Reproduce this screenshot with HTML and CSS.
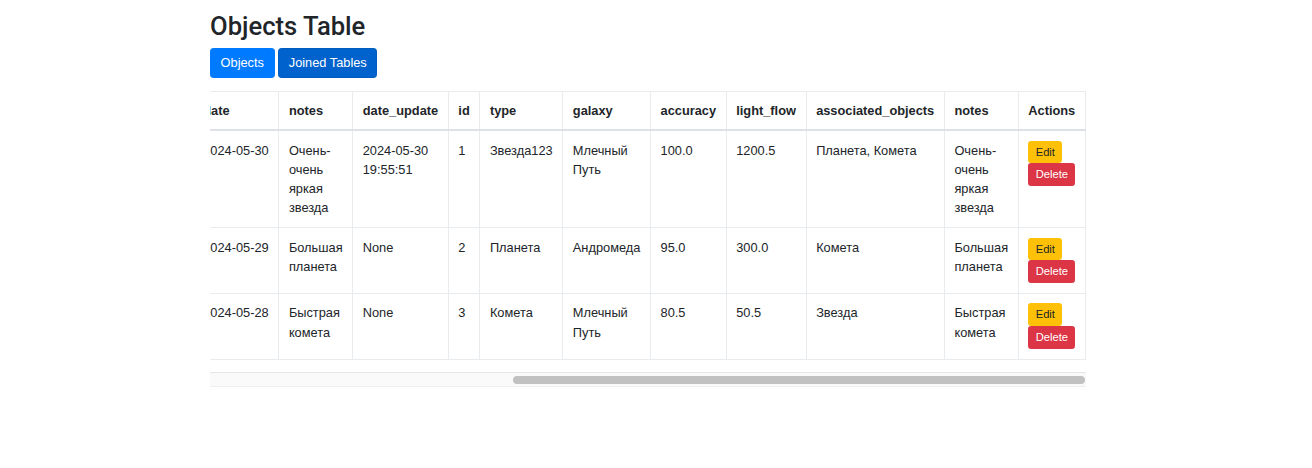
FILE: index.html
```html
<!DOCTYPE html>
<html lang="ru">
<head>
<meta charset="utf-8">
<title>Objects Table</title>
<link rel="stylesheet" href="styles.css">
</head>
<body>
<div class="container">
  <h2 class="title">Objects Table</h2>
  <div class="nav-buttons">
    <a class="btn btn-primary" href="#">Objects</a>
    <a class="btn btn-primary active" href="#">Joined Tables</a>
  </div>
  <div class="table-wrap">
    <table class="table">
      <thead>
        <tr>
          <th>id</th>
          <th>object_id</th>
          <th>earth_position</th>
          <th>sun_position</th>
          <th>moon_position</th>
          <th>date</th>
          <th>notes</th>
          <th>date_update</th>
          <th>id</th>
          <th>type</th>
          <th>galaxy</th>
          <th>accuracy</th>
          <th>light_flow</th>
          <th>associated_objects</th>
          <th>notes</th>
          <th>Actions</th>
        </tr>
      </thead>
      <tbody>
        <tr>
          <td>1</td>
          <td>1</td>
          <td>10.5</td>
          <td>20.3</td>
          <td>5.7</td>
          <td class="nowrap">2024-05-30</td>
          <td>Очень-очень яркая звезда</td>
          <td><span class="nowrap">2024-05-30</span> 19:55:51</td>
          <td>1</td>
          <td>Звезда123</td>
          <td>Млечный Путь</td>
          <td>100.0</td>
          <td>1200.5</td>
          <td>Планета, Комета</td>
          <td>Очень-очень яркая звезда</td>
          <td><div class="actions"><a class="btn btn-sm btn-warning" href="#">Edit</a><a class="btn btn-sm btn-danger" href="#">Delete</a></div></td>
        </tr>
        <tr>
          <td>2</td>
          <td>2</td>
          <td>15.2</td>
          <td>25.1</td>
          <td>7.3</td>
          <td class="nowrap">2024-05-29</td>
          <td>Большая планета</td>
          <td>None</td>
          <td>2</td>
          <td>Планета</td>
          <td>Андромеда</td>
          <td>95.0</td>
          <td>300.0</td>
          <td>Комета</td>
          <td>Большая планета</td>
          <td><div class="actions"><a class="btn btn-sm btn-warning" href="#">Edit</a><a class="btn btn-sm btn-danger" href="#">Delete</a></div></td>
        </tr>
        <tr>
          <td>3</td>
          <td>3</td>
          <td>30.8</td>
          <td>12.4</td>
          <td>9.9</td>
          <td class="nowrap">2024-05-28</td>
          <td>Быстрая комета</td>
          <td>None</td>
          <td>3</td>
          <td>Комета</td>
          <td>Млечный Путь</td>
          <td>80.5</td>
          <td>50.5</td>
          <td>Звезда</td>
          <td>Быстрая комета</td>
          <td><div class="actions"><a class="btn btn-sm btn-warning" href="#">Edit</a><a class="btn btn-sm btn-danger" href="#">Delete</a></div></td>
        </tr>
      </tbody>
    </table>
  </div>
  <div class="scrollbar" aria-hidden="true">
    <div class="scrollbar-thumb"></div>
  </div>
</div>
</body>
</html>
```

FILE: styles.css
```css
* {
  box-sizing: border-box;
}

body {
  margin: 0;
  font-family: "Liberation Sans", Arial, sans-serif;
  font-size: 12.8px;
  line-height: 1.5;
  color: #212529;
  background: #fff;
}

.container {
  width: 876px;
  margin: 0 0 0 210px;
  padding-top: 10.6px;
}

.title {
  margin: 0 0 6.4px;
  font-family: Roboto, "Liberation Sans", sans-serif;
  font-size: 25.6px;
  font-weight: 500;
  line-height: 1.2;
  color: #212529;
}

.nav-buttons {
  font-size: 12.8px;
}

.btn {
  display: inline-block;
  font-size: 12.8px;
  line-height: 19.2px;
  padding: 4.8px 9.6px;
  border: 1px solid transparent;
  border-radius: 3.2px;
  text-decoration: none;
  text-align: center;
  white-space: nowrap;
}

.btn-primary {
  background: #007bff;
  border-color: #007bff;
  color: #fff;
}

.btn-primary.active {
  background: #0062cc;
  border-color: #005cbf;
}

.table-wrap {
  margin-top: 12.8px;
  width: 100%;
  overflow: hidden;
  direction: rtl;
}

.table {
  direction: ltr;
  width: 100%;
  margin-bottom: 12.8px;
  border-collapse: collapse;
  color: #212529;
}

.table th,
.table td {
  padding: 9.6px;
  vertical-align: top;
  border: 1px solid #e9ecef;
  text-align: left;
}

.table th {
  font-weight: 700;
}

.table thead th {
  padding-top: 8.8px;
  padding-bottom: 8.8px;
  vertical-align: bottom;
  border-bottom: 2px solid #dee2e6;
}

.nowrap {
  white-space: nowrap;
}

.actions {
  display: flex;
  flex-direction: column;
  align-items: flex-start;
}

.btn-sm {
  font-size: 11.2px;
  line-height: 16.8px;
  padding: 2px 6.4px;
  border-radius: 2.6px;
}

.btn-warning {
  background: #ffc107;
  border-color: #ffc107;
  color: #212529;
}

.btn-danger {
  background: #dc3545;
  border-color: #dc3545;
  color: #fff;
}

.scrollbar {
  display: flex;
  justify-content: flex-end;
  align-items: center;
  height: 15px;
  padding: 0 1px;
  background: #fafafa;
  border-top: 1px solid #e6e6e6;
  border-bottom: 1px solid #efefef;
}

.scrollbar-thumb {
  width: 572px;
  height: 8px;
  border-radius: 4px;
  background: #c1c1c1;
}
```
